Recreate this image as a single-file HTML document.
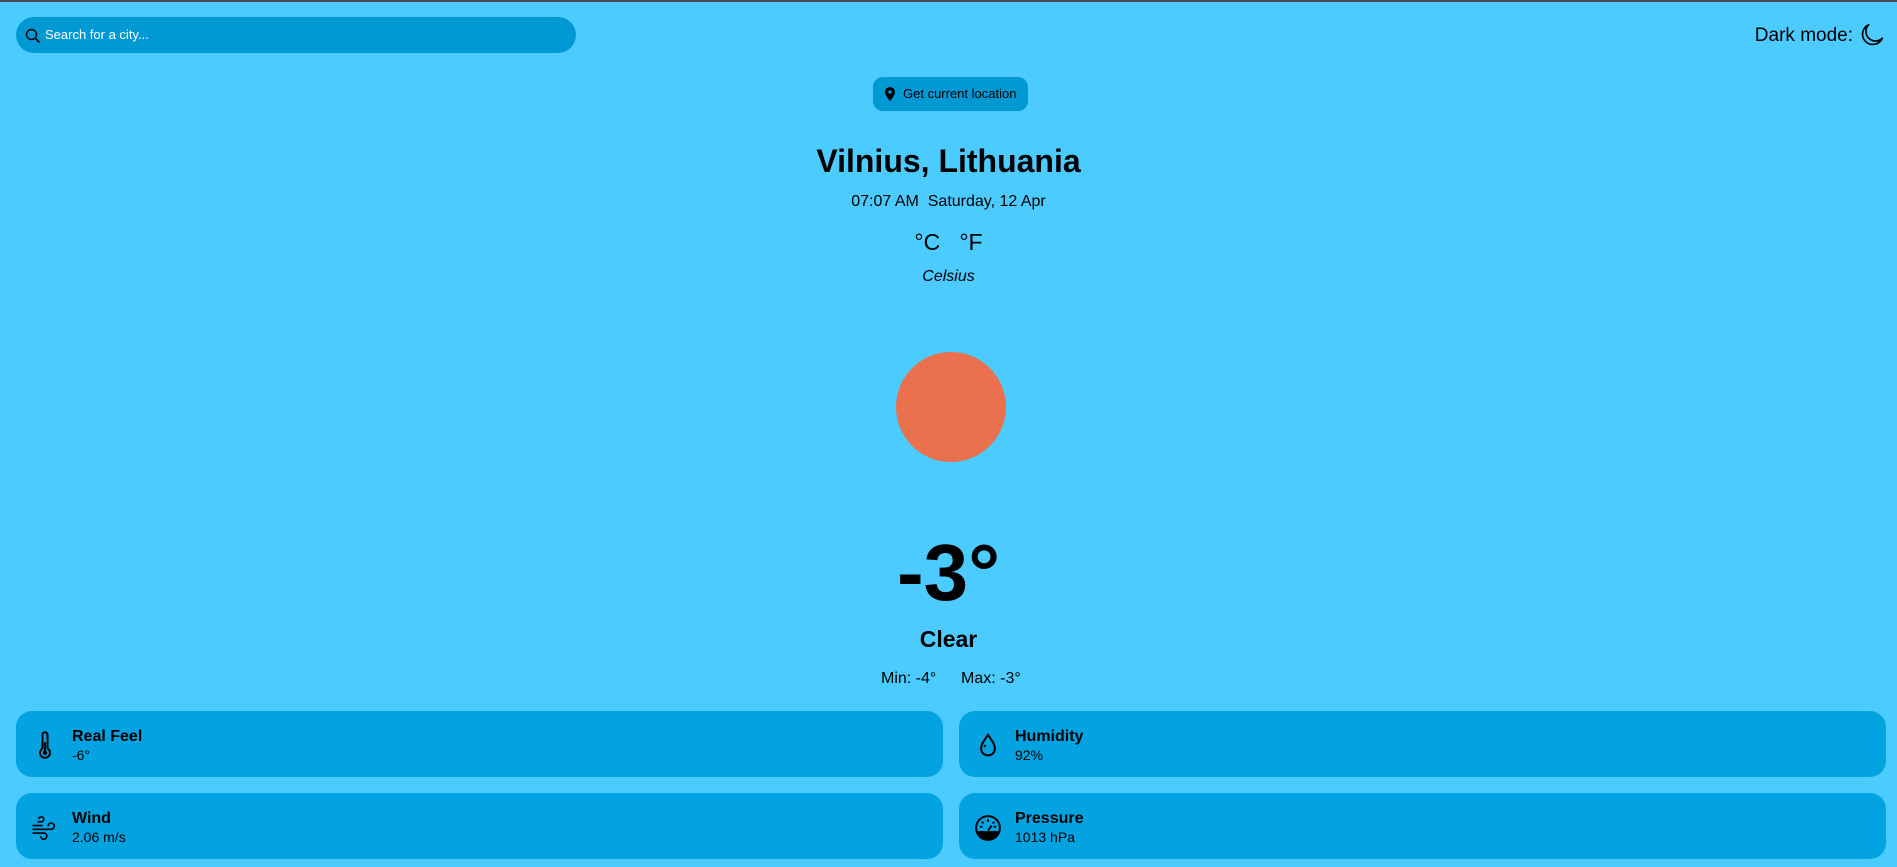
<!DOCTYPE html>
<html><head><meta charset="utf-8"><style>
*{margin:0;padding:0;box-sizing:border-box}
body{width:1897px;height:867px;background:#4bcbff;font-family:"Liberation Sans",Arial,sans-serif;color:#000;position:relative;overflow:hidden;border-top:2px solid #4a4a4a}
.a{position:absolute}
.c{position:absolute;left:0;width:1897px;text-align:center}
.search{left:16px;top:15px;width:560px;height:36px;border-radius:18px;background:#0099d3;color:#fff;font-size:13px;line-height:36px;padding-left:29px}
.search svg{position:absolute;left:9px;top:11px}
.loc{left:873px;top:75px;width:155px;height:34px;border-radius:10px;background:#0099d3;font-size:13px;line-height:34px;padding-left:30px}
.loc svg{position:absolute;left:11px;top:10px}
.card{position:absolute;height:66px;width:927px;border-radius:16px;background:#03a3e1}
.card .t{position:absolute;left:56px;top:17px;font-weight:bold;font-size:16px}
.card .v{position:absolute;left:56px;top:36px;font-size:14px}
.card svg{position:absolute;left:14px;top:20px}
</style></head><body>
<div class="a search"><svg width="16" height="16" viewBox="0 0 16 16"><circle cx="6.5" cy="6.5" r="5" fill="none" stroke="#000" stroke-width="1.4"/><path d="M10 10l4.5 4.5" stroke="#000" stroke-width="1.8"/></svg>Search for a city...</div>
<div class="a" style="right:44px;top:23px;font-size:19px">Dark mode:</div>
<svg class="a" style="left:1859px;top:20px" width="26" height="26" viewBox="0 0 24 24"><path d="M9 2.5A9.5 9.5 0 1 0 21.5 15 7.8 7.8 0 0 1 9 2.5z" fill="none" stroke="#000" stroke-width="1.5" stroke-linejoin="round"/></svg>
<div class="a loc"><svg width="12" height="14" viewBox="0 0 12 14"><path d="M6 0a5 5 0 0 0-5 5c0 3.5 5 9 5 9s5-5.5 5-9a5 5 0 0 0-5-5z" fill="#000"/><circle cx="6" cy="5" r="1.8" fill="#0099d3"/></svg>Get current location</div>
<div class="c" style="top:141px;font-size:32px;font-weight:bold">Vilnius, Lithuania</div>
<div class="c" style="top:191px;font-size:16px">07:07 AM&nbsp; Saturday, 12 Apr</div>
<div class="c" style="top:227px;font-size:23px">°C&nbsp;&nbsp; °F</div>
<div class="c" style="top:266px;font-size:16px;font-style:italic">Celsius</div>
<div class="a" style="left:896px;top:350px;width:110px;height:110px;border-radius:50%;background:#ea704e"></div>
<div class="c" style="top:523px;font-size:80px;font-weight:bold;line-height:95px">-3°</div>
<div class="c" style="top:624px;font-size:23px;font-weight:bold">Clear</div>
<div class="a" style="left:881px;top:668px;font-size:16px">Min: -4°</div>
<div class="a" style="left:961px;top:668px;font-size:16px">Max: -3°</div>
<div class="card" style="left:16px;top:709px"><svg width="30" height="30" viewBox="0 0 24 24"><path d="M10 3a2 2 0 0 1 4 0v11a4 4 0 1 1-4 0z" fill="none" stroke="#000" stroke-width="1.6"/><circle cx="12" cy="17.5" r="1.8" fill="#000"/><path d="M12 9v8" stroke="#000" stroke-width="1.6"/></svg><div class="t">Real Feel</div><div class="v">-6°</div></div>
<div class="card" style="left:959px;top:709px"><svg width="30" height="30" viewBox="0 0 24 24"><path d="M12 3C9 7.5 6.5 10.5 6.5 14a5.5 5.5 0 0 0 11 0C17.5 10.5 15 7.5 12 3z" fill="none" stroke="#000" stroke-width="1.6"/><path d="M10 11l-1 2" stroke="#000" stroke-width="1.3"/></svg><div class="t">Humidity</div><div class="v">92%</div></div>
<div class="card" style="left:16px;top:791px"><svg width="30" height="30" viewBox="0 0 24 24" fill="none" stroke="#000" stroke-width="1.3"><path d="M2 10h8M2 13h15a2.5 2.5 0 1 0-2.5-2.5M2 16h9a2.5 2.5 0 1 1-2.5 2.5M6 7h3a2 2 0 1 0-2-2"/></svg><div class="t">Wind</div><div class="v">2.06 m/s</div></div>
<div class="card" style="left:959px;top:791px"><svg width="30" height="30" viewBox="0 0 24 24"><circle cx="12" cy="12" r="9.5" fill="none" stroke="#000" stroke-width="1.6"/><path d="M3 14.5h18a9.5 9.5 0 0 1-18 0z" fill="#000"/><path d="M12 5v2M7 7l1.3 1.3M17 7l-1.3 1.3M5.5 11h2M16.5 11h2M12 14l3-4" stroke="#000" stroke-width="1.5"/></svg><div class="t">Pressure</div><div class="v">1013 hPa</div></div>
</body></html>
